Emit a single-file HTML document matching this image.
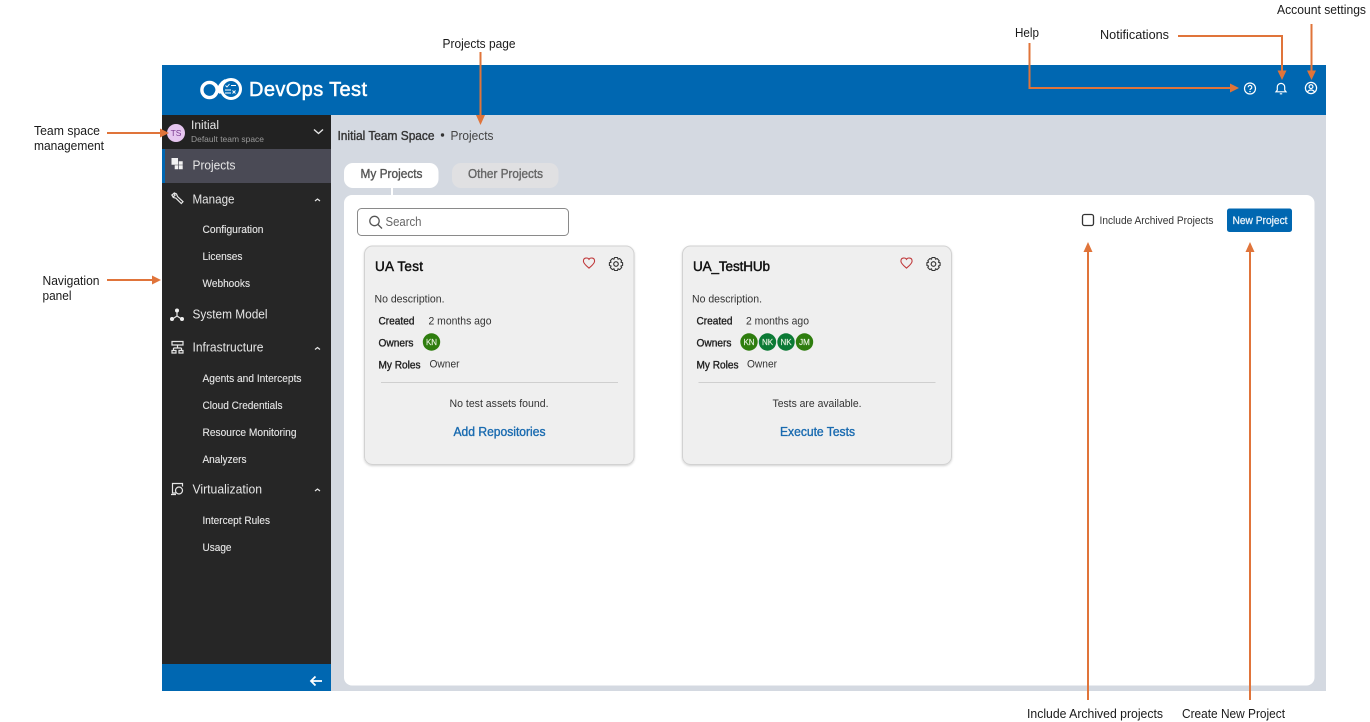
<!DOCTYPE html>
<html lang="en">
<head>
<meta charset="utf-8">
<title>DevOps Test - Projects</title>
<style>
html,body{margin:0;padding:0;background:#fff;width:1370px;height:722px;overflow:hidden}
svg{display:block}
text{font-family:"Liberation Sans",Arial,sans-serif}
.ann{font-size:12.5px;fill:#1a1a1a}
.nav{font-size:13px;fill:#e6e6e6}
.sub{font-size:11px;fill:#e6e6e6;stroke:#e6e6e6;stroke-width:.12}
.b{font-size:11px;fill:#222;stroke:#222;stroke-width:.36}
.r{font-size:11px;fill:#333}
.av{font-size:8px;fill:#e8f2e0;stroke:#e8f2e0;stroke-width:.15;text-anchor:middle}
.o{stroke:#e0743a;stroke-width:2;fill:none}
.of{fill:#e0743a}
.ic{fill:none;stroke:#e6e6e6;stroke-width:1.2}
.w{fill:none;stroke:#fff;stroke-width:1.2}
</style>
</head>
<body>
<svg width="1370" height="722" viewBox="0 0 1370 722" xmlns="http://www.w3.org/2000/svg">
<defs>
<filter id="sh" x="-5%" y="-5%" width="110%" height="110%"><feDropShadow dx="0" dy="1" stdDeviation="1" flood-color="#000" flood-opacity=".18"/></filter>
<g id="heart"><path d="M0 -4.200C-1.200 -6.200 -5.600 -6 -5.600 -2.400C-5.600 0 -2.400 2.600 0 4.600C2.400 2.600 5.600 0 5.600 -2.400C5.600 -6 1.200 -6.200 0 -4.200Z" fill="none" stroke="#c0393b" stroke-width="1.100"/></g>
<g id="gear"><path d="M-1.500 -6.500H1.500L2 -4.800L3.600 -5.500L5.700 -3.300L4.900 -1.800L6.600 -1.300V1.500L4.900 2L5.700 3.500L3.600 5.600L2 4.800L1.500 6.500H-1.500L-2 4.800L-3.600 5.600L-5.700 3.500L-4.900 2L-6.600 1.500V-1.300L-4.900 -1.800L-5.700 -3.300L-3.600 -5.500L-2 -4.800Z" fill="none" stroke="#333" stroke-width="1.100" stroke-linejoin="round"/><circle r="2.300" fill="none" stroke="#333" stroke-width="1.100"/></g>
</defs>

<!-- shell -->
<rect x="162" y="65" width="1164" height="50" fill="#0067b1"/>
<rect x="331" y="115" width="995" height="576" fill="#d4d9e1"/>
<rect x="162" y="115" width="169" height="549" fill="#262626"/>
<rect x="162" y="115" width="169" height="34" fill="#222"/>
<rect x="162" y="149" width="169" height="34" fill="#4a4a55"/>
<rect x="162" y="149" width="3" height="34" fill="#0067b1"/>
<rect x="162" y="664" width="169" height="27" fill="#0067b1"/>

<!-- logo -->
<circle cx="209.500" cy="90" r="7.600" fill="none" stroke="#fff" stroke-width="3.400"/>
<path d="M215 95C218 91 219.500 84 225 81M215.500 85L220 92" fill="none" stroke="#fff" stroke-width="3.400" stroke-linecap="round"/>
<circle cx="231" cy="89" r="9.500" fill="none" stroke="#fff" stroke-width="3"/>
<path d="M225.500 85.500l1.500 1.500 2.500-3M231 85.500h5M225 90h6M225 93h6M232.500 90.500l3 3M235.500 90.500l-3 3" stroke="#fff" stroke-width=".9" fill="none"/>
<text x="249" y="96" font-size="20" fill="#fff" stroke="#fff" stroke-width=".5" textLength="118" lengthAdjust="spacing">DevOps Test</text>

<!-- header icons -->
<circle cx="1250" cy="88.500" r="5.500" class="w"/>
<path d="M1248.200 87.200a1.800 1.800 0 1 1 2.800 1.500c-.7.400-1 .8-1 1.300" class="w" stroke-width="1"/>
<circle cx="1250" cy="91.600" r=".7" fill="#fff"/>
<path d="M1276 91.800h10l-1.300-1.700v-3a3.700 3.700 0 0 0-7.400 0v3Z M1279.800 93.800h2.400" class="w"/>
<circle cx="1311" cy="88" r="5.600" class="w"/>
<circle cx="1311" cy="86.600" r="1.900" class="w"/>
<path d="M1307.500 92c.8-1.500 2-2 3.500-2s2.700.5 3.500 2" class="w"/>

<!-- team space row -->
<circle cx="176" cy="133" r="9" fill="#e6c6f0"/>
<text x="176" y="136" font-size="8.500" fill="#7a3a90" text-anchor="middle">TS</text>
<text x="191" y="129" font-size="11.500" fill="#e6e6e6" textLength="28" lengthAdjust="spacingAndGlyphs">Initial</text>
<text x="191" y="142" font-size="8.500" fill="#9a9a9a" textLength="73" lengthAdjust="spacingAndGlyphs">Default team space</text>
<path d="M314 129.500l4.500 4 4.500-4" fill="none" stroke="#e6e6e6" stroke-width="1.400"/>

<!-- nav -->
<path d="M171.500 158h6.500v6.700h-6.500zM178.700 161.300h4v3.400h-4zM174.700 165.300h3.300v4h-3.300zM178.700 165.300h4v4h-4z" fill="#f2f2f2"/>
<text x="192.500" y="169.500" class="nav" textLength="43" lengthAdjust="spacingAndGlyphs">Projects</text>

<path d="M171.500 195.500l2.800-2.500 2.200 1 1 2.500 5.500 5.200-1.700 1.800-5.400-5.300-2.600-.7-1-1.700 1.400.7 1.400-1.300-1-1.500" class="ic"/>
<text x="192.500" y="203.500" class="nav" textLength="42" lengthAdjust="spacingAndGlyphs">Manage</text>
<path d="M315 201l2.500-2 2.500 2" class="ic" stroke-width="1"/>
<text x="202.500" y="233" class="sub" textLength="61" lengthAdjust="spacingAndGlyphs">Configuration</text>
<text x="202.500" y="260" class="sub" textLength="40" lengthAdjust="spacingAndGlyphs">Licenses</text>
<text x="202.500" y="287" class="sub" textLength="47.500" lengthAdjust="spacingAndGlyphs">Webhooks</text>

<path d="M177 312v4M177 316l-4.500 3M177 316l4.500 3" stroke="#e6e6e6" stroke-width="1.200" fill="none"/>
<circle cx="177" cy="310.500" r="2" fill="#f0f0f0"/><circle cx="172" cy="319" r="2" fill="#f0f0f0"/><circle cx="182" cy="319" r="2" fill="#f0f0f0"/>
<text x="192.500" y="318.500" class="nav" textLength="75" lengthAdjust="spacingAndGlyphs">System Model</text>

<path d="M172 341.500h11v3.500h-11zM177.500 345v3M173.500 348h8M173.500 348v2M181.500 348v2M172 350.500h4v2.500h-4zM179 350.500h4v2.500h-4z" class="ic" stroke-width="1"/>
<text x="192.500" y="351.500" class="nav" textLength="71" lengthAdjust="spacingAndGlyphs">Infrastructure</text>
<path d="M315 349.500l2.500-2 2.500 2" class="ic" stroke-width="1"/>
<text x="202.500" y="382" class="sub" textLength="99" lengthAdjust="spacingAndGlyphs">Agents and Intercepts</text>
<text x="202.500" y="409" class="sub" textLength="80" lengthAdjust="spacingAndGlyphs">Cloud Credentials</text>
<text x="202.500" y="436" class="sub" textLength="94" lengthAdjust="spacingAndGlyphs">Resource Monitoring</text>
<text x="202.500" y="463" class="sub" textLength="44" lengthAdjust="spacingAndGlyphs">Analyzers</text>

<path d="M176 493h-3.500v-9.500h10v3M171 494.500h5" class="ic"/>
<circle cx="179" cy="490.500" r="3.500" class="ic" stroke-width="1.500"/>
<text x="192.500" y="493.500" class="nav" textLength="69.500" lengthAdjust="spacingAndGlyphs">Virtualization</text>
<path d="M315 491l2.500-2 2.500 2" class="ic" stroke-width="1"/>
<text x="202.500" y="524" class="sub" textLength="67.500" lengthAdjust="spacingAndGlyphs">Intercept Rules</text>
<text x="202.500" y="551" class="sub" textLength="29" lengthAdjust="spacingAndGlyphs">Usage</text>

<path d="M322 681h-11M315.500 676.500l-4.500 4.500 4.500 4.500" fill="none" stroke="#fff" stroke-width="1.800"/>

<!-- breadcrumb -->
<text x="337.500" y="140" font-size="12.500" fill="#333" stroke="#333" stroke-width=".36" textLength="97" lengthAdjust="spacingAndGlyphs">Initial Team Space</text>
<circle cx="442.500" cy="135" r="1.700" fill="#333"/>
<text x="450.500" y="140" font-size="12.500" fill="#444" textLength="43" lengthAdjust="spacingAndGlyphs">Projects</text>

<!-- tabs & panel -->
<rect x="344" y="163" width="94.500" height="25" rx="9" fill="#fff"/>
<rect x="391" y="187" width="2" height="9" fill="#fff"/>
<rect x="452" y="163" width="106.500" height="25" rx="9" fill="#e0e0e2"/>
<text x="360.500" y="178" font-size="12.500" fill="#555" stroke="#555" stroke-width=".36" textLength="62" lengthAdjust="spacingAndGlyphs">My Projects</text>
<text x="468" y="178" font-size="12.500" fill="#666" stroke="#666" stroke-width=".36" textLength="75" lengthAdjust="spacingAndGlyphs">Other Projects</text>
<rect x="344" y="195" width="970.500" height="490.500" rx="8" fill="#fff"/>

<!-- search -->
<rect x="357.500" y="208.500" width="211" height="27" rx="4" fill="#fff" stroke="#8a8a8a"/>
<circle cx="374.500" cy="221" r="4.700" fill="none" stroke="#555" stroke-width="1.300"/>
<path d="M378 224.500l4 4" stroke="#555" stroke-width="1.300"/>
<text x="385.500" y="226" font-size="12.500" fill="#666" textLength="36" lengthAdjust="spacingAndGlyphs">Search</text>

<!-- archive & new -->
<rect x="1082.500" y="214.500" width="11" height="11" rx="2" fill="#fff" stroke="#333" stroke-width="1.300"/>
<text x="1099.500" y="224" font-size="11" fill="#333" textLength="114" lengthAdjust="spacingAndGlyphs">Include Archived Projects</text>
<rect x="1227" y="208.500" width="65" height="23.500" rx="2.500" fill="#0067b1"/>
<text x="1232.500" y="224" font-size="11" fill="#eaf3fa" stroke="#eaf3fa" stroke-width=".28" textLength="55" lengthAdjust="spacingAndGlyphs">New Project</text>

<!-- card 1 -->
<rect x="364.500" y="246" width="269.500" height="218.500" rx="8" fill="#efefef" stroke="#d2d2d2" filter="url(#sh)"/>
<text x="375" y="271" font-size="13.500" fill="#111" stroke="#111" stroke-width=".45" textLength="48" lengthAdjust="spacing">UA Test</text>
<use href="#heart" x="589" y="263.500"/>
<use href="#gear" x="616" y="264"/>
<text x="374.500" y="302.500" class="r" textLength="70" lengthAdjust="spacingAndGlyphs">No description.</text>
<text x="378.500" y="324.500" class="b" textLength="36" lengthAdjust="spacingAndGlyphs">Created</text>
<text x="428.500" y="324.500" class="r" textLength="63" lengthAdjust="spacingAndGlyphs">2 months ago</text>
<text x="378.500" y="346.500" class="b" textLength="35" lengthAdjust="spacingAndGlyphs">Owners</text>
<circle cx="431.500" cy="342" r="8.700" fill="#2e7d0e"/>
<text x="431.500" y="345" class="av">KN</text>
<text x="378.500" y="368.500" class="b" textLength="42" lengthAdjust="spacingAndGlyphs">My Roles</text>
<text x="429.500" y="367.500" class="r" textLength="30" lengthAdjust="spacingAndGlyphs">Owner</text>
<rect x="381" y="382" width="237" height="1" fill="#cfcfcf"/>
<text x="449.500" y="407" class="r" textLength="99" lengthAdjust="spacingAndGlyphs">No test assets found.</text>
<text x="453.500" y="436" font-size="12.500" fill="#1a6bb0" stroke="#1a6bb0" stroke-width=".36" textLength="92" lengthAdjust="spacingAndGlyphs">Add Repositories</text>

<!-- card 2 -->
<rect x="682.500" y="246" width="269" height="218.500" rx="8" fill="#efefef" stroke="#d2d2d2" filter="url(#sh)"/>
<text x="693" y="271" font-size="13.500" fill="#111" stroke="#111" stroke-width=".45" textLength="77" lengthAdjust="spacing">UA_TestHUb</text>
<use href="#heart" x="906.500" y="263.500"/>
<use href="#gear" x="933.500" y="264"/>
<text x="692" y="302.500" class="r" textLength="70" lengthAdjust="spacingAndGlyphs">No description.</text>
<text x="696.500" y="324.500" class="b" textLength="36" lengthAdjust="spacingAndGlyphs">Created</text>
<text x="746" y="324.500" class="r" textLength="63" lengthAdjust="spacingAndGlyphs">2 months ago</text>
<text x="696.500" y="346.500" class="b" textLength="35" lengthAdjust="spacingAndGlyphs">Owners</text>
<circle cx="749" cy="342" r="8.700" fill="#2e7d0e"/><text x="749" y="345" class="av">KN</text>
<circle cx="767.500" cy="342" r="8.700" fill="#0b7a35"/><text x="767.500" y="345" class="av">NK</text>
<circle cx="786" cy="342" r="8.700" fill="#0b7a35"/><text x="786" y="345" class="av">NK</text>
<circle cx="804.500" cy="342" r="8.700" fill="#2e7d0e"/><text x="804.500" y="345" class="av">JM</text>
<text x="696.500" y="368.500" class="b" textLength="42" lengthAdjust="spacingAndGlyphs">My Roles</text>
<text x="747" y="367.500" class="r" textLength="30" lengthAdjust="spacingAndGlyphs">Owner</text>
<rect x="698.500" y="382" width="237" height="1" fill="#cfcfcf"/>
<text x="772.500" y="407" class="r" textLength="89" lengthAdjust="spacingAndGlyphs">Tests are available.</text>
<text x="780" y="436" font-size="12.500" fill="#1a6bb0" stroke="#1a6bb0" stroke-width=".36" textLength="75" lengthAdjust="spacingAndGlyphs">Execute Tests</text>

<!-- annotations -->
<text x="34" y="135" class="ann" textLength="66" lengthAdjust="spacingAndGlyphs">Team space</text>
<text x="34" y="150" class="ann" textLength="70" lengthAdjust="spacingAndGlyphs">management</text>
<path d="M107 133h54" class="o"/><path d="M160 128.500l9 4.500-9 4.500z" class="of"/>
<text x="42.500" y="285" class="ann" textLength="57" lengthAdjust="spacingAndGlyphs">Navigation</text>
<text x="42.500" y="300" class="ann" textLength="29" lengthAdjust="spacingAndGlyphs">panel</text>
<path d="M107 280h46" class="o"/><path d="M152 275.500l9 4.500-9 4.500z" class="of"/>
<text x="442.500" y="48" class="ann" textLength="73" lengthAdjust="spacingAndGlyphs">Projects page</text>
<path d="M480.500 52v64" class="o"/><path d="M476 115l4.500 10 4.500-10z" class="of"/>
<text x="1015" y="37" class="ann" textLength="24" lengthAdjust="spacingAndGlyphs">Help</text>
<path d="M1029.500 43v45h202" class="o"/><path d="M1230 83.500l9 4.500-9 4.500z" class="of"/>
<text x="1100" y="39" class="ann" textLength="69" lengthAdjust="spacingAndGlyphs">Notifications</text>
<path d="M1178 36h104v35" class="o"/><path d="M1277.500 70.500l4.500 9.500 4.500-9.500z" class="of"/>
<text x="1277" y="14" class="ann" textLength="89" lengthAdjust="spacingAndGlyphs">Account settings</text>
<path d="M1311.500 24v47" class="o"/><path d="M1307 70.500l4.500 9.500 4.500-9.500z" class="of"/>
<path d="M1088 700v-449" class="o"/><path d="M1083.500 252l4.500-10 4.500 10z" class="of"/>
<text x="1027" y="718" class="ann" textLength="136" lengthAdjust="spacingAndGlyphs">Include Archived projects</text>
<path d="M1250 700v-449" class="o"/><path d="M1245.500 252l4.500-10 4.500 10z" class="of"/>
<text x="1182" y="718" class="ann" textLength="103" lengthAdjust="spacingAndGlyphs">Create New Project</text>
</svg>
</body>
</html>
